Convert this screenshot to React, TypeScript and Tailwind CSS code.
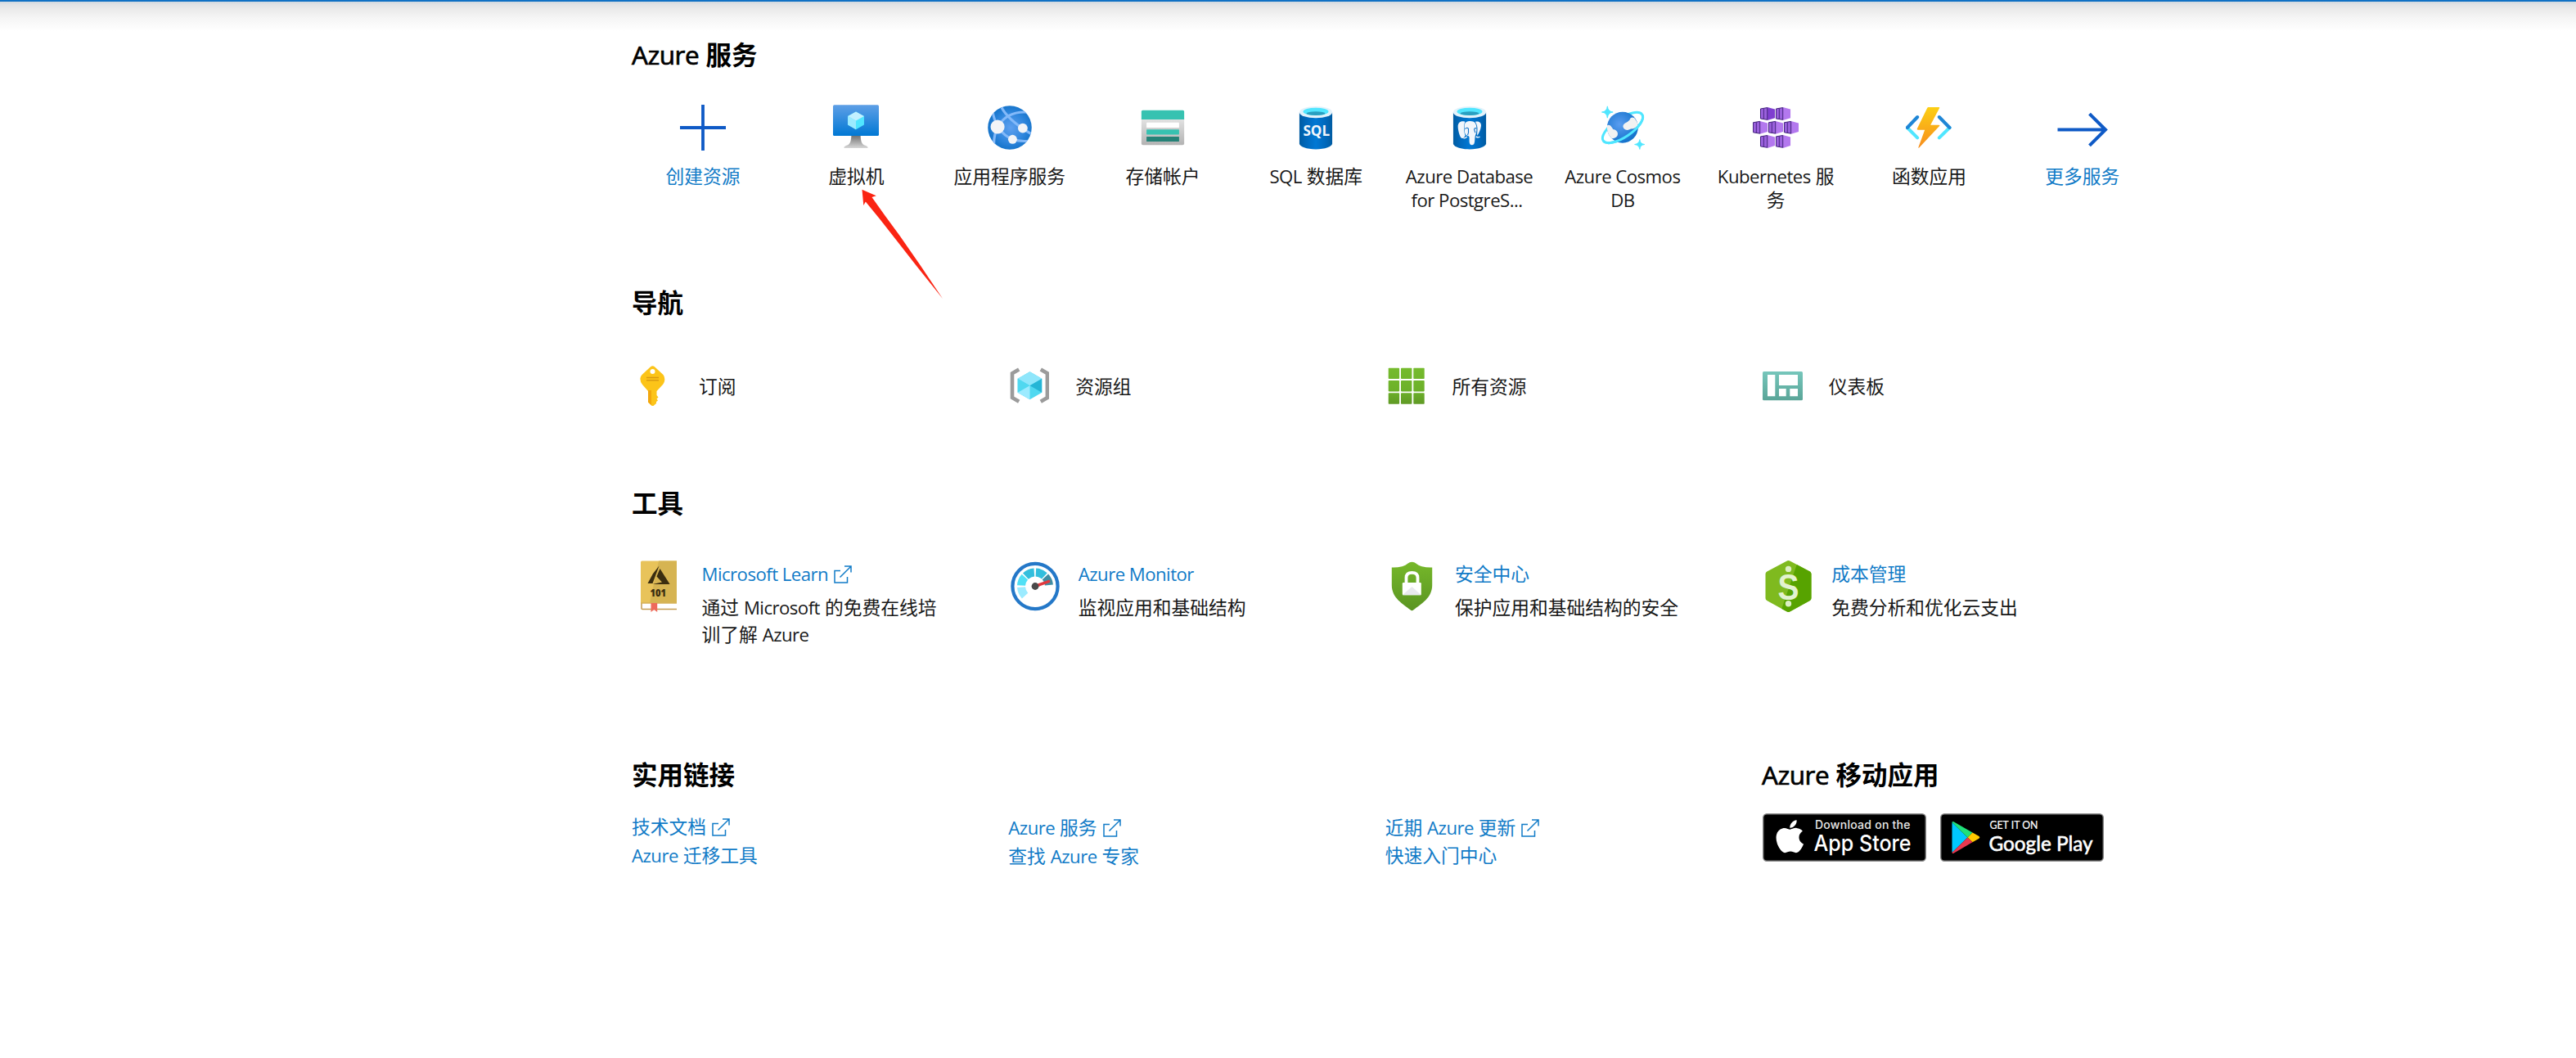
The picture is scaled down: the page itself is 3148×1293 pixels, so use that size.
import React from "react";
import { FaApple } from "react-icons/fa";

const LINK = "text-[#117bc7]";

function T({ children }: { children: string }) {
  const parts = children.split(/([\x21-\x7e]+(?: +[\x21-\x7e]+)*)/);
  return (
    <>
      {parts.map((p, i) =>
        i % 2 ? (
          <span key={i} className="text-[0.975em] tracking-[-0.024em]">
            {p}
          </span>
        ) : (
          p
        ),
      )}
    </>
  );
}

/* Sets each line of a text as a block of its own. */
function Lines({ children }: { children: string }) {
  return (
    <>
      {children.split("\n").map((line) => (
        <span key={line} className="block">
          <T>{line}</T>
        </span>
      ))}
    </>
  );
}

function Heading({ children }: { children: string }) {
  const parts = children.split(/([A-Za-z]+)/);
  return (
    <h2 className="h-[42px] whitespace-pre text-[31.5px] leading-[42px] font-bold text-black">
      {parts.map((p, i) =>
        i % 2 ? (
          <span key={i} className="font-normal tracking-[-0.015em] [-webkit-text-stroke:0.7px_black]">
            {p}
          </span>
        ) : (
          p
        ),
      )}
    </h2>
  );
}

function External() {
  return (
    <svg className="ml-[7px] inline-block h-[22px] w-[22px] align-[-3px]" viewBox="0 0 22 22" fill="none" stroke="#117bc7" strokeWidth="1.5">
      <path d="M8 6.5H1V21H16.500V14M7.500 14.500L20.800 1.200M13 1H21V8.500" />
    </svg>
  );
}

function PlusIcon() {
  return (
    <svg className="h-14 w-14" viewBox="0 0 56 56">
      <path d="M28 0V56M0 28H56" stroke="#0f5ac6" strokeWidth="3.8" />
    </svg>
  );
}

function VmIcon() {
  return (
    <svg className="h-14 w-14" viewBox="0 0 18 18">
      <defs>
        <linearGradient id="vm" x2="0" y2="1">
          <stop offset="0" stopColor="#5e9fe6" />
          <stop offset="1" stopColor="#0078d4" />
        </linearGradient>
        <linearGradient id="vms" x2="0" y2="1">
          <stop offset="0" stopColor="#707070" />
          <stop offset="1" stopColor="#d6d6d6" />
        </linearGradient>
      </defs>
      <path d="M7.200 12H10.800C10.900 15.200 11.600 15.800 13.200 16.200Q13.700 16.500 13.700 17H4.300Q4.300 16.500 4.800 16.200C6.400 15.800 7.100 15.200 7.200 12Z" fill="url(#vms)" />
      <rect y=".1" width="18" height="12.100" rx=".5" fill="url(#vm)" />
      <path d="M9 2.700L12.200 4.500V7.900L9 9.700L5.800 7.900V4.500Z" fill="#50e6ff" />
      <path d="M9 2.700L12.200 4.500L9 6.300L5.800 4.500Z" fill="#c3f1ff" />
      <path d="M5.800 4.500L9 6.300V9.700L5.800 7.900Z" fill="#9cebff" />
    </svg>
  );
}

function AppServiceIcon() {
  return (
    <svg className="h-14 w-14" viewBox="0 0 18 18">
      <defs>
        <radialGradient id="as" cx=".52" cy=".5" r=".55">
          <stop offset="0" stopColor="#5ea0ef" />
          <stop offset=".6" stopColor="#2f86dd" />
          <stop offset="1" stopColor="#1070c6" />
        </radialGradient>
        <clipPath id="asc">
          <circle cx="9" cy="9" r="8.600" />
        </clipPath>
      </defs>
      <circle cx="9" cy="9" r="8.600" fill="url(#as)" />
      <g clipPath="url(#asc)" stroke="#83b9f9" strokeWidth="1" fill="none">
        <path d="M5.500 .5Q8 6 18 11.800M4.300 8.700Q8 2.200 16.500 3M4.300 8.700Q2.500 5 2.300 2.500M4.300 8.700Q7 12.500 10.100 13.500Q13 14.600 16.500 14.200M4.300 8.700Q2.600 12 2.800 16" />
      </g>
      <circle cx="4.200" cy="8.700" r="2.750" fill="#f2f4f7" />
      <circle cx="14.100" cy="9.200" r="1.900" fill="#f2f4f7" />
      <circle cx="10.100" cy="13.600" r="1.750" fill="#f2f4f7" />
    </svg>
  );
}

function StorageIcon() {
  return (
    <svg className="h-14 w-14" viewBox="0 0 18 18">
      <defs>
        <linearGradient id="st" x2="0" y2="1">
          <stop offset="0" stopColor="#e2e2e2" />
          <stop offset="1" stopColor="#b3b3b3" />
        </linearGradient>
      </defs>
      <path d="M.6 5.600H17.400V15.200Q17.400 15.800 16.800 15.800H1.200Q.6 15.800 .6 15.200Z" fill="url(#st)" />
      <path d="M1.100 2.200H16.900Q17.400 2.200 17.400 2.700V5.800H.6V2.700Q.6 2.200 1.100 2.200Z" fill="#37c2b1" />
      <rect x="2.600" y="7" width="12.800" height="2" rx=".2" fill="#fff" />
      <rect x="2.600" y="9.700" width="12.800" height="2" rx=".2" fill="#37c2b1" />
      <rect x="2.600" y="12.500" width="12.800" height="2" rx=".2" fill="#258277" />
    </svg>
  );
}

function Cylinder({ id }: { id: string }) {
  return (
    <>
      <defs>
        <linearGradient id={id}>
          <stop offset="0" stopColor="#005ba1" />
          <stop offset=".2" stopColor="#0068bb" />
          <stop offset=".5" stopColor="#0078d4" />
          <stop offset=".8" stopColor="#0068bb" />
          <stop offset="1" stopColor="#005ba1" />
        </linearGradient>
      </defs>
      <path d="M2.550 2.900V15.200C2.550 16.500 5.400 17.500 9 17.500S15.450 16.500 15.450 15.200V2.900Z" fill={`url(#${id})`} />
      <ellipse cx="9" cy="2.950" rx="6.450" ry="2.300" fill="#e2f2fb" />
      <ellipse cx="9" cy="2.700" rx="4.950" ry="1.500" fill="#50e6ff" />
      <ellipse cx="9" cy="3.400" rx="3.700" ry=".75" fill="#2a9fc0" />
    </>
  );
}

function SqlIcon() {
  return (
    <svg className="h-14 w-14" viewBox="0 0 18 18">
      <Cylinder id="sql" />
      <text x="4" y="12.200" textLength="10.500" lengthAdjust="spacingAndGlyphs" fontSize="5.800" fontWeight="700" fill="#f2f6fb" className="font-['Open_Sans',sans-serif]">
        SQL
      </text>
    </svg>
  );
}

function PostgresIcon() {
  return (
    <svg className="h-14 w-14" viewBox="0 0 18 18">
      <Cylinder id="pg" />
      <path d="M7.200 6.700C5.600 6.200 4.300 6.900 4.400 8.800C4.500 10.300 5.200 13.300 6.200 13.200C6.700 13.100 7 12.500 7.300 12.100C6.700 11 6.600 8 7.200 6.700Z" fill="#f2f6fb" />
      <path d="M7.500 6.900C8.700 6.200 10.400 6.300 11.200 7.200C11.900 8.300 11.900 10.500 11.300 11.900C10.900 12.700 11.200 14.600 10.700 15.400C10.200 16 9.200 15.900 9 15.200C8.700 14.200 9.100 12.600 8.600 12.300C7.300 12.200 7 11.200 7 10C6.900 8.500 6.900 7.300 7.500 6.900Z" fill="#f2f6fb" />
      <path d="M11.200 6.700C12.600 6.200 13.600 7 13.500 8.300C13.300 9.800 12.700 11.200 12 12.100C11.700 11 12.700 9 11.200 6.700Z" fill="#f2f6fb" />
      <path d="M11.500 12.500Q12.200 13.100 13 12.600M6.600 13.100Q7.300 13.300 8 12.500" stroke="#f2f6fb" strokeWidth=".45" fill="none" />
      <path d="M7.200 9.500Q8 8.700 8.500 9.400Q8.700 11 8.200 12M11.700 9.300Q10.900 9 10.800 9.700L11.200 11" stroke="#0f6fc6" strokeWidth=".35" fill="none" />
    </svg>
  );
}

function CosmosIcon() {
  return (
    <svg className="h-14 w-14" viewBox="0 0 18 18">
      <defs>
        <radialGradient id="cos" cx=".4" cy=".4" r=".65">
          <stop offset="0" stopColor="#5a9df0" />
          <stop offset="1" stopColor="#0f6fc9" />
        </radialGradient>
        <clipPath id="cosc">
          <circle cx="8.950" cy="8.900" r="6.100" />
        </clipPath>
      </defs>
      <g transform="rotate(-34 9 9)">
        <ellipse cx="9" cy="9" rx="9.200" ry="3.700" fill="none" stroke="#50e6ff" strokeWidth=".95" />
      </g>
      <circle cx="8.950" cy="8.900" r="6.100" fill="url(#cos)" />
      <g clipPath="url(#cosc)" fill="#f2f2f2">
        <path d="M2.500 8.300Q4 7.500 4.700 8.800Q5 9.600 5.900 9.800Q7.500 10.600 6.900 12.200Q6.300 13.300 4.300 13.300L2.500 11Z" />
        <path d="M11.700 6Q12.200 4.500 13.600 5.200L15.200 7.500Q14.500 9.500 12.200 9.500Q10.600 10.400 9.500 9.400Q8.600 8.300 9.800 7.300Q10.700 7 11.700 6Z" />
      </g>
      <g transform="rotate(-34 9 9)">
        <path d="M-.2 9A9.200 3.700 0 0 0 18.200 9" fill="none" stroke="#50e6ff" strokeWidth=".95" />
      </g>
      <path d="M3 .6Q3.200 2.700 5.200 2.900Q3.200 3.100 3 5.200Q2.800 3.100 .8 2.900Q2.800 2.700 3 .6ZM15.700 13.700Q15.800 15.400 17.600 15.600Q15.800 15.800 15.700 17.500Q15.500 15.800 13.700 15.600Q15.500 15.400 15.700 13.700Z" fill="#50e6ff" stroke="#50e6ff" strokeWidth=".3" />
    </svg>
  );
}

const CUBES: [number, number, string][] = [
  [2.9, 1, "#7f3fd0"],
  [9, 1, "#b378ee"],
  [0, 6.4, "#b378ee"],
  [6.1, 6.4, "#b378ee"],
  [12.2, 6.4, "#b378ee"],
  [2.9, 11.9, "#b378ee"],
  [9, 11.9, "#b378ee"],
];

function KubernetesIcon() {
  return (
    <svg className="h-14 w-14" viewBox="0 0 18 18">
      {CUBES.map(([x, y, side], i) => (
        <g key={i} transform={`translate(${x} ${y})`}>
          <path d="M2.800 0L5.800 .8V4.200L2.800 5.100Z" fill={side} />
          <path d="M.15 .6L2.800 .15V4.900L.15 4.450Z" fill="#9a60dc" stroke="#3f1f7a" strokeWidth=".32" />
          <path d="M1.400 .5V4.600" stroke="#3f1f7a" strokeWidth=".28" />
        </g>
      ))}
    </svg>
  );
}

function FunctionIcon() {
  return (
    <svg className="h-14 w-14" viewBox="628.5 39 168 168">
      <defs>
        <linearGradient id="fn" x2="0" y2="1">
          <stop offset="0" stopColor="#fccf14" />
          <stop offset="1" stopColor="#f78d1e" />
        </linearGradient>
      </defs>
      <g fill="none" strokeWidth="12" strokeLinecap="round">
        <path d="M634 123L671 160M789 123L751 160" stroke="#50e6ff" />
        <path d="M671 84L634 123M751 84L789 123" stroke="#1f86d6" />
      </g>
      <path d="M711 48H750Q753 48 752 51L719 113H750Q755 113 751 118L678 196Q673 200 675 194L698 131H673Q668 131 670 127L707 51Q709 48 711 48Z" fill="url(#fn)" />
    </svg>
  );
}

function ArrowRightIcon() {
  return (
    <svg className="h-14 w-14 overflow-visible" viewBox="0 0 56 56" fill="none" stroke="#0f5ac6" strokeWidth="4">
      <path d="M-2.500 30.500H56.500M36.500 11.200L56 30.500L36.500 49.800" />
    </svg>
  );
}

function KeyIcon() {
  return (
    <svg className="h-[49px] w-[49px]" viewBox="773 447 49 49">
      <path d="M795 448.200Q797.500 446.200 800 448.200L810.500 458Q813 461 812 466Q811.500 468 810 470L802.500 478V483L804.500 485.500L802.500 487.500L804 489.500L802 491V493L798.800 495.700Q797.500 496.500 796.300 495.700L792 491.500V478L785 470Q782 466 782.500 462Q783 459.500 784.500 458Z" fill="#fcc419" />
      <path d="M792 477H796V495.300L792 491.500Z" fill="#f2a70f" />
      <path d="M790 461.500H805M790 464.800H805" stroke="#d99a12" strokeWidth="1.500" />
      <circle cx="797.500" cy="454" r="3" fill="#fff" />
    </svg>
  );
}

function ResourceGroupIcon() {
  return (
    <svg className="h-[49px] w-[49px]" viewBox="1232.8 447 49 49">
      <path d="M1245 451.500L1236.800 456.300V486L1245 490.800M1271.600 451.500L1279.700 456.300V486L1271.600 490.800" fill="none" stroke="#9b9b9b" strokeWidth="4.600" />
      <path d="M1258.300 454.300L1273 462.800V479.800L1258.300 488.300L1243.500 479.800V462.800Z" fill="#50d8f0" />
      <path d="M1258.300 454.300L1273 462.800L1258.300 471.300L1243.500 462.800Z" fill="#8fe6fb" />
      <path d="M1243.500 462.800L1258.300 471.300L1243.500 479.800Z" fill="#50d8f0" />
      <path d="M1273 462.800V479.800L1258.300 471.300Z" fill="#25b5d6" />
      <path d="M1243.500 479.800L1258.300 471.300V488.300Z" fill="#9cebff" />
    </svg>
  );
}

function GridIcon() {
  return (
    <svg className="h-[49px] w-[49px]" viewBox="0 0 49 49">
      <defs>
        <linearGradient id="gr" gradientUnits="userSpaceOnUse" x2="0" y2="49">
          <stop offset="0" stopColor="#76bc2d" />
          <stop offset=".65" stopColor="#6cb02a" />
          <stop offset="1" stopColor="#5e9624" />
        </linearGradient>
      </defs>
      <g fill="url(#gr)">
        {[2.7, 18, 33.3].map((y) => [2.7, 18, 33.3].map((x) => <rect key={x + y * 100} x={x} y={y} width="13.400" height="13.400" rx=".8" />))}
      </g>
    </svg>
  );
}

function DashboardIcon() {
  return (
    <svg className="h-[49px] w-[49px]" viewBox="2154 447 49 49">
      <defs>
        <linearGradient id="db" x2="0" y2="1">
          <stop offset="0" stopColor="#76c6bb" />
          <stop offset="1" stopColor="#5aa598" />
        </linearGradient>
      </defs>
      <rect x="2154" y="454" width="49" height="35.200" rx="1.500" fill="url(#db)" />
      <path d="M2160 458H2169.300V484.300H2160ZM2174 458H2197V471H2174ZM2174 475H2182.700V484.300H2174ZM2187.300 475H2197V484.300H2187.300Z" fill="#fff" />
    </svg>
  );
}

function BookIcon() {
  return (
    <svg className="h-[63px] w-[63px]" viewBox="774 685 63 63">
      <path d="M784 736H828V744.800H784Z" fill="#fff" />
      <path d="M785 735V743.500Q785 744.500 786 744.500H828" fill="none" stroke="#c49a4f" strokeWidth="1.500" />
      <path d="M784 687Q784 685.500 785.500 685.500H828V737H784Z" fill="#e8c35a" />
      <path d="M806 685.500H828V737H795Z" fill="#d6b452" />
      <path d="M784 737H828" stroke="#d6b25a" strokeWidth="1.500" />
      <path d="M796.500 737H804.200V748L800.300 745L796.500 748Z" fill="#ee6a5b" />
      <path d="M806.500 691.500L799 701L792.500 713H798.500Z" fill="#3a2d10" />
      <path d="M807.500 695L819.600 714H798.500L810 711.500L803.500 704.500Z" fill="#3a2d10" />
      <text x="795.500" y="729" textLength="19.500" lengthAdjust="spacingAndGlyphs" fontSize="13" fontWeight="800" fill="#3a2d10" className="font-['Open_Sans',sans-serif]">
        101
      </text>
    </svg>
  );
}

/* One gauge segment, between two angles counted anticlockwise from the right. */
function segment(from: number, to: number) {
  const pt = (deg: number, r: number) => {
    const a = (deg * Math.PI) / 180;
    return `${(1265.5 + r * Math.cos(a)).toFixed(2)} ${(716.5 - r * Math.sin(a)).toFixed(2)}`;
  };
  return `M${pt(from, 22)}A22 22 0 0 1 ${pt(to, 22)}L${pt(to, 12)}A12 12 0 0 0 ${pt(from, 12)}Z`;
}

function MonitorIcon() {
  return (
    <svg className="h-[63px] w-[63px]" viewBox="1233.5 685 63 63">
      <circle cx="1265.500" cy="716.500" r="27.600" fill="#fff" stroke="#2478c8" strokeWidth="4.200" />
      <path d={segment(223, 184)} fill="#9cebff" />
      <path d={segment(177, 138)} fill="#50e0f5" />
      <path d={segment(133, 94)} fill="#32bedd" />
      <path d={segment(87, 48)} fill="#32bedd" />
      <path d={segment(43, 5)} fill="#3f8da3" />
      <path d="M1265.500 716.500L1282 710.600" stroke="#e0383e" strokeWidth="3.600" strokeLinecap="round" />
      <circle cx="1265.500" cy="716.500" r="4.400" fill="#4a4a4a" />
    </svg>
  );
}

function ShieldIcon() {
  return (
    <svg className="h-[63px] w-[63px]" viewBox="1694.500 685 63 63">
      <defs>
        <linearGradient id="sh" x2="0" y2="1">
          <stop offset="0" stopColor="#76b82a" />
          <stop offset="1" stopColor="#5a9422" />
        </linearGradient>
      </defs>
      <path d="M1726 686.700C1730 686.700 1732 690.500 1738 692.200Q1744 693.800 1750.700 693.500V715C1750.700 731 1737 738 1728 745.300Q1726 747 1724 745.300C1715 738 1701.300 731 1701.300 715V693.500Q1708 693.800 1714 692.200C1720 690.500 1722 686.700 1726 686.700Z" fill="url(#sh)" />
      <path d="M1719 713V706Q1719 699.800 1726 699.800T1733 706V713" fill="none" stroke="#fff" strokeWidth="3.800" />
      <rect x="1714.300" y="712" width="23" height="15.200" rx="1.200" fill="#fff" />
      <path d="M1714.300 727.200L1726 717L1737.300 727.200Z" fill="#e9e9ee" />
    </svg>
  );
}

function CostIcon() {
  return (
    <svg className="h-[63px] w-[63px]" viewBox="2154.200 685 63 63">
      <path d="M2183.500 685.800Q2185.700 684.400 2188 685.800L2212 698.500Q2213.700 699.500 2213.700 701.500V731Q2213.700 733 2212 734L2188 747.300Q2185.700 748.500 2183.500 747.300L2159.500 734Q2157.700 733 2157.700 731V701.500Q2157.700 699.500 2159.500 698.500Z" fill="#7fba1f" />
      <path d="M2196 690L2212 698.500Q2213.700 699.500 2213.700 701.500V731Q2213.700 733 2212 734L2188 747.300Q2185.700 748.500 2183.500 747.300L2177.500 744Z" fill="#57a300" />
      <circle cx="2185.700" cy="695.400" r="3.700" fill="#dcefc4" />
      <circle cx="2185.700" cy="737.800" r="3.700" fill="#dcefc4" />
      <text x="2172.700" y="732.500" textLength="26" lengthAdjust="spacingAndGlyphs" fontSize="44" fontWeight="700" fill="#e3f2d0" className="font-['Liberation_Sans',sans-serif]">
        S
      </text>
    </svg>
  );
}

function AppStoreBadge() {
  return (
    <svg className="h-[59px] w-[200px]" viewBox="0 0 200 59">
      <rect x=".7" y=".7" width="198.600" height="57.600" rx="4.500" fill="#000" stroke="#8a8a8a" strokeWidth="1.400" />
      <FaApple x="10.500" y="5.500" size={45.5} color="#fff" />
      <g fill="#fff" className="font-[Inter,sans-serif]">
        <text x="64" y="19" fontSize="14" fontWeight="500" textLength="116.500" fill="#e8e8e8">
          Download on the
        </text>
        <text x="62.500" y="45.500" fontSize="27" fontWeight="500" textLength="119" lengthAdjust="spacingAndGlyphs">
          App Store
        </text>
      </g>
    </svg>
  );
}

function GooglePlayBadge() {
  return (
    <svg className="h-[59px] w-[200px]" viewBox="0 0 200 59">
      <rect x=".7" y=".7" width="198.600" height="57.600" rx="4.500" fill="#000" stroke="#8a8a8a" strokeWidth="1.400" />
      <path d="M14.500 11V48L33.500 29.500Z" fill="#00c8ff" />
      <path d="M14.500 11Q14.700 9.500 16.500 10.200L39.500 23.500L33.500 29.500Z" fill="#1fe07a" />
      <path d="M39.500 23.500L47.500 28Q49.300 29.300 47.500 30.700L39.500 35.300L33.500 29.500Z" fill="#ffc900" />
      <path d="M39.500 35.300L16.500 48.700Q14.700 49.300 14.500 48L33.500 29.500Z" fill="#e8384f" />
      <g fill="#fff" stroke="#fff" fontWeight="400">
        <text x="60.500" y="18.800" fontSize="13" strokeWidth=".2" textLength="59" lengthAdjust="spacingAndGlyphs" className="font-[Lato,sans-serif]">
          GET IT ON
        </text>
        <text x="59.500" y="45.500" fontSize="25.500" strokeWidth=".6" textLength="127" lengthAdjust="spacingAndGlyphs" className="font-[Lato,sans-serif]">
          Google Play
        </text>
      </g>
    </svg>
  );
}

const SERVICES: { label: string; icon: React.ReactNode; link?: boolean }[] = [
  { label: "创建资源", icon: <PlusIcon />, link: true },
  { label: "虚拟机", icon: <VmIcon /> },
  { label: "应用程序服务", icon: <AppServiceIcon /> },
  { label: "存储帐户", icon: <StorageIcon /> },
  { label: "SQL 数据库", icon: <SqlIcon /> },
  { label: "Azure Database\nfor PostgreS... ", icon: <PostgresIcon /> },
  { label: "Azure Cosmos\nDB", icon: <CosmosIcon /> },
  { label: "Kubernetes 服\n务", icon: <KubernetesIcon /> },
  { label: "函数应用", icon: <FunctionIcon /> },
  { label: "更多服务", icon: <ArrowRightIcon />, link: true },
];

const NAV = [
  { label: "订阅", icon: <KeyIcon /> },
  { label: "资源组", icon: <ResourceGroupIcon /> },
  { label: "所有资源", icon: <GridIcon /> },
  { label: "仪表板", icon: <DashboardIcon /> },
];

const TOOLS = [
  { title: "Microsoft Learn", external: true, text: "通过 Microsoft 的免费在线培\n训了解 Azure", icon: <BookIcon /> },
  { title: "Azure Monitor", text: "监视应用和基础结构", icon: <MonitorIcon /> },
  { title: "安全中心", text: "保护应用和基础结构的安全", icon: <ShieldIcon /> },
  { title: "成本管理", text: "免费分析和优化云支出", icon: <CostIcon /> },
];

const LINKS = [
  ["技术文档", "Azure 迁移工具"],
  ["Azure 服务", "查找 Azure 专家"],
  ["近期 Azure 更新", "快速入门中心"],
];

export default function App() {
  return (
    <div className="relative h-[1293px] w-[3148px] overflow-hidden bg-white font-['Open_Sans','Noto_Sans_CJK_SC',sans-serif] text-[22.75px] text-[#181818]">
      <div className="h-[2px] bg-[#0f70c4]" />
      <div className="h-[36px] bg-[linear-gradient(to_bottom,#cfd8e0_0px,#dfe1e4_3px,#ebebeb_10px,#f5f5f5_20px,#fff_36px)]" />

      <main className="ml-[772px] w-[1880px] pt-[8px]">
        <section className="h-[303px]">
          <Heading>Azure 服务</Heading>
          <div className="mt-[40px] -ml-[6.600px] grid w-[1873px] grid-cols-10">
            {SERVICES.map((s) => (
              <a key={s.label} className="flex flex-col items-center">
                {s.icon}
                <span className={`mt-[17px] text-center leading-[29px] whitespace-pre ${s.link ? LINK : ""}`}>
                  <Lines>{s.label}</Lines>
                </span>
              </a>
            ))}
          </div>
        </section>

        <section className="h-[245px]">
          <Heading>导航</Heading>
          <div className="mt-[56px] ml-px grid w-[1841px] grid-cols-4">
            {NAV.map((n) => (
              <a key={n.label} className="flex items-center gap-8">
                {n.icon}
                <span className="pt-[2px] leading-[33px]">{n.label}</span>
              </a>
            ))}
          </div>
        </section>

        <section className="h-[332px]">
          <Heading>工具</Heading>
          <div className="mt-[49px] ml-px grid w-[1841px] grid-cols-4">
            {TOOLS.map((t) => (
              <div key={t.title} className="flex items-start">
                {t.icon}
                <div className="ml-[21.500px] whitespace-pre">
                  <a className={`block h-[41px] leading-[33px] ${LINK}`}>
                    <T>{t.title}</T>
                    {t.external && <External />}
                  </a>
                  <p className="leading-[33px]">
                    <Lines>{t.text}</Lines>
                  </p>
                </div>
              </div>
            ))}
          </div>
        </section>

        <section className="flex">
          <div className="w-[1381px]">
            <Heading>实用链接</Heading>
            <div className="mt-[26px] grid grid-cols-3">
              {LINKS.map(([a, b]) => (
                <div key={a} className={`flex flex-col leading-[34px] whitespace-pre ${LINK}`}>
                  <a>
                    <T>{a}</T>
                    <External />
                  </a>
                  <a>
                    <T>{b}</T>
                  </a>
                </div>
              ))}
            </div>
          </div>
          <div>
            <Heading>Azure 移动应用</Heading>
            <div className="mt-[26px] ml-px flex gap-[17px]">
              <AppStoreBadge />
              <GooglePlayBadge />
            </div>
          </div>
        </section>
      </main>

      <svg className="absolute top-[230px] left-[1050px] h-[136px] w-[104px]" viewBox="1050 230 104 136">
        <path d="M1053.500 231.700L1070.800 239.300L1065.500 241L1081.500 263.500L1099.500 288L1124.500 324L1152 365L1120 325L1095 293L1075 267.500L1057.800 246.500L1055.300 251Z" fill="#fa2413" />
      </svg>
    </div>
  );
}
